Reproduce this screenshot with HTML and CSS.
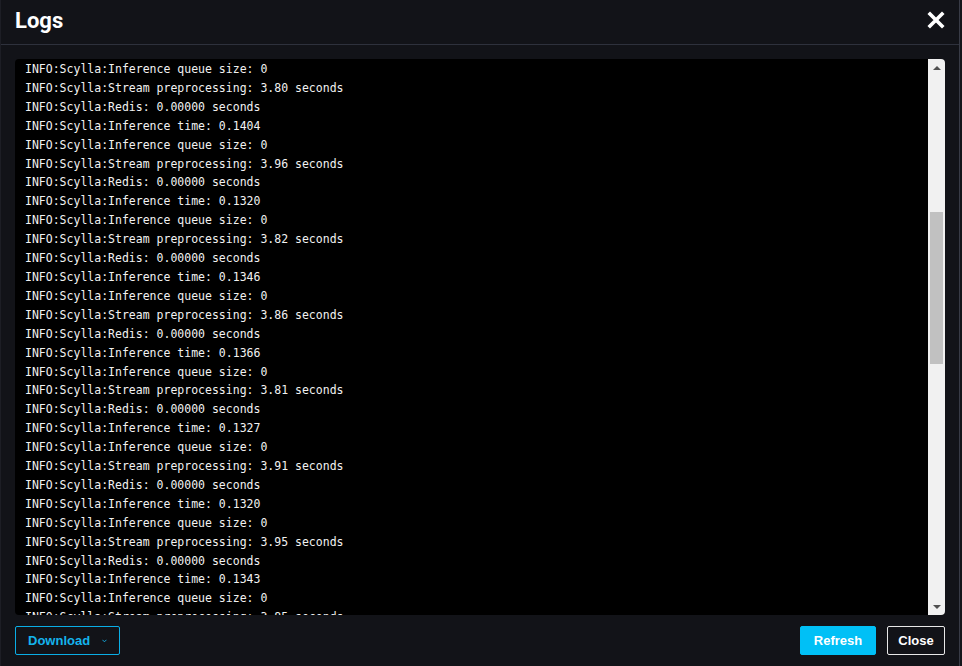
FILE: index.html
```html
<!DOCTYPE html>
<html lang="en">

<head>
    <meta charset="UTF-8">
    <title>Logs</title>
    <link rel="stylesheet" href="styles.css">
</head>

<body>
    <div class="modal">
        <div class="modal-header">
            <h1>Logs</h1>
            <button class="close-x" aria-label="Close">
                <svg width="18" height="18" viewBox="0 0 18 18">
                    <path d="M3 3 L15 15 M15 3 L3 15" stroke="#fff" stroke-width="3.6" stroke-linecap="square" />
                </svg>
            </button>
        </div>

        <div class="modal-body">
            <div class="log-box">
                <pre class="log-text" id="logText"></pre>
                <div class="scrollbar">
                    <div class="arrow arrow-up"></div>
                    <div class="track">
                        <div class="thumb"></div>
                    </div>
                    <div class="arrow arrow-down"></div>
                </div>
            </div>
        </div>

        <div class="modal-footer">
            <button class="btn btn-outline-info">
                <span>Download</span>
                <svg class="caret" width="6" height="4" viewBox="0 0 6 4">
                    <path d="M0.5 0.5 L3 3 L5.5 0.5" fill="none" stroke="#14b4ec" stroke-width="1.1" />
                </svg>
            </button>
            <div class="right-buttons">
                <button class="btn btn-info">Refresh</button>
                <button class="btn btn-outline-light">Close</button>
            </div>
        </div>
    </div>

    <script>
        // log cycle values as shown
        const runs = [
            ['3.80', '0.1404'], ['3.96', '0.1320'], ['3.82', '0.1346'], ['3.86', '0.1366'],
            ['3.81', '0.1327'], ['3.91', '0.1320'], ['3.95', '0.1343'], ['3.85', '0.1351']
        ];
        let lines = [];
        runs.forEach(r => {
            lines.push('INFO:Scylla:Inference queue size: 0');
            lines.push('INFO:Scylla:Stream preprocessing: ' + r[0] + ' seconds');
            lines.push('INFO:Scylla:Redis: 0.00000 seconds');
            lines.push('INFO:Scylla:Inference time: ' + r[1]);
        });
        document.getElementById('logText').textContent = lines.join('\n');
    </script>
</body>

</html>
```

FILE: styles.css
```css
body {
    margin: 0;
    background-color: #15161c;
    font-family: "Liberation Sans", Arial, sans-serif;
}

.modal {
    width: 958px;
    height: 666px;
    background-color: #121318;
    border-left: 1px solid #1d1e25;
    border-right: 1px solid #383b46;
    display: flex;
    flex-direction: column;
}

.modal-header {
    height: 44px;
    border-bottom: 1px solid #2e313c;
    display: flex;
    align-items: center;
    justify-content: space-between;
    padding: 0 14px 0 14px;
}

.modal-header h1 {
    margin: 0;
    color: #fff;
    font-family: Roboto, "Liberation Sans", sans-serif;
    font-size: 22px;
    font-weight: bold;
    margin-top: -4px;
}

.close-x {
    background: none;
    border: none;
    padding: 0;
    width: 18px;
    height: 18px;
    margin-top: -4px;
    cursor: pointer;
}

.modal-body {
    padding: 14px 14px 0 14px;
}

.log-box {
    height: 556px;
    background-color: #000;
    border-radius: 4px;
    display: flex;
    overflow: hidden;
}

.log-text {
    flex: 1;
    margin: 0;
    padding: 1px 10px 0;
    overflow: hidden;
    color: #f2f2f2;
    font-family: "DejaVu Sans Mono", monospace;
    font-size: 11.5px;
    line-height: 18.9px;
}

.scrollbar {
    width: 17px;
    background-color: #f1f1f1;
    display: flex;
    flex-direction: column;
}

.arrow {
    height: 17px;
    display: flex;
    align-items: center;
    justify-content: center;
}

.arrow::before {
    content: "";
    border-left: 4px solid transparent;
    border-right: 4px solid transparent;
}

.arrow-up::before {
    border-bottom: 4px solid #505050;
}

.arrow-down::before {
    border-top: 4px solid #505050;
}

.track {
    flex: 1;
    padding: 136px 2px 0;
}

.thumb {
    height: 152px;
    background-color: #c1c1c1;
}

.modal-footer {
    padding: 11px 14px 0 14px;
    display: flex;
    justify-content: space-between;
}

.right-buttons {
    display: flex;
    gap: 11px;
}

.btn {
    height: 29px;
    font-family: "Liberation Sans", Arial, sans-serif;
    font-size: 13px;
    font-weight: bold;
    border-radius: 2px;
    padding: 0 12px;
    cursor: pointer;
}

.btn-outline-info {
    width: 105px;
    background: transparent;
    border: 1px solid #0aaee6;
    color: #14b4ec;
    display: flex;
    align-items: center;
    white-space: nowrap;
}

.caret {
    margin-left: 12px;
    margin-top: 1px;
}

.btn-info {
    width: 76px;
    background-color: #00c0f6;
    border: 1px solid #00c0f6;
    color: #fff;
}

.btn-outline-light {
    width: 58px;
    background: transparent;
    border: 1px solid #e8e8e8;
    color: #fff;
    padding: 0;
}
```
